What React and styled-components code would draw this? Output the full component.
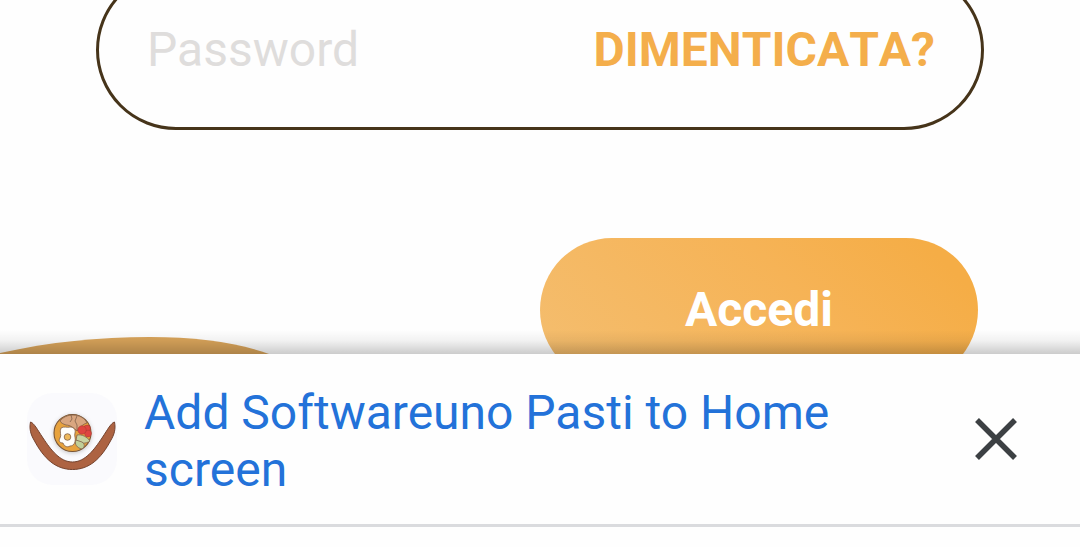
import React from "react";
import styled, { createGlobalStyle } from "styled-components";

const GlobalStyle = createGlobalStyle`
  * { box-sizing: border-box; }
  body { margin: 0; background: #fefefe; font-family: Roboto, "Liberation Sans", sans-serif; }
`;

const Screen = styled.div`
  display: flex;
  flex-direction: column;
  height: 100vh;
`;

const LoginArea = styled.main`
  position: relative;
  flex: 1;
  min-height: 0;
  overflow: hidden;
`;

const LoginForm = styled.form`
  display: flex;
  flex-direction: column;
  gap: 108px;
  margin-top: -30px;
  padding: 0 96px;
`;

const PasswordField = styled.div`
  display: flex;
  align-items: center;
  height: 160px;
  padding: 0 46px 0 48px;
  border: 3px solid #46341a;
  border-radius: 80px;
`;

const PasswordInput = styled.input`
  flex: 1;
  min-width: 0;
  padding: 0;
  border: 0;
  outline: 0;
  background: transparent;
  color: #46341a;
  font: 400 48px/56px Roboto, "Liberation Sans", sans-serif;
  &::placeholder { color: #dfdddc; opacity: 1; }
`;

const ForgotLink = styled.a`
  color: #f4ae4b;
  font-size: 48px;
  font-weight: 700;
  line-height: 56px;
  font-kerning: none;
  text-decoration: none;
`;

const SubmitButton = styled.button`
  align-self: flex-end;
  width: 438px;
  height: 144px;
  margin-right: 6px;
  padding: 0;
  border: 0;
  border-radius: 72px;
  background: linear-gradient(45deg, #f4be70, #f6b356 60%, #f5ad46 90%);
  color: #fff;
  font: 700 48px/56px Roboto, "Liberation Sans", sans-serif;
`;

const Wave = styled.svg`
  position: absolute;
  left: 0;
  bottom: 0;
`;

const InstallBanner = styled.aside`
  position: relative;
  display: flex;
  align-items: center;
  gap: 27px;
  padding: 26px 60px 26px 27px;
  border-bottom: 3px solid #dadbde;
  margin-bottom: 20px;
  background: #fefefe;
  &::before {
    content: "";
    position: absolute;
    left: 0;
    right: 0;
    bottom: 100%;
    height: 24px;
    background: linear-gradient(to bottom, rgba(0, 0, 0, 0), rgba(0, 0, 0, 0.05) 45%, rgba(0, 0, 0, 0.2));
    pointer-events: none;
  }
`;

const AppIcon = styled.svg`
  flex: none;
  width: 90px;
  height: 92px;
`;

const InstallLink = styled.a`
  flex: 1;
  max-width: 740px;
  padding-top: 4px;
  color: #2372d9;
  font-size: 48px;
  line-height: 57px;
  text-decoration: none;
`;

const CloseButton = styled.button`
  display: flex;
  margin-left: auto;
  padding: 0;
  border: 0;
  background: transparent;
`;

function MealIcon() {
  return (
    <AppIcon viewBox="7 7 90 92" aria-hidden="true">
      <defs>
        <filter id="plateShadow" x="-30%" y="-30%" width="160%" height="160%">
          <feDropShadow dx="0" dy="1" stdDeviation="2" floodOpacity="0.22" />
        </filter>
      </defs>
      <rect x="7" y="7" width="90" height="92" rx="26" fill="#fafafd" />
      <path
        d="M10.5 36 C14 37 17 43 23 52 C31 64 40 76 52.5 76 C65 76 74 64 82 52 C88 43 91 37 94.5 36 C96 43 94 49 91 54 C81 73 69 83.5 52.5 83.5 C36 83.5 24 73 14 54 C11 49 9 43 10.5 36Z"
        fill="#ad6342"
        stroke="#74432e"
        strokeWidth="1"
      />
      <circle cx="52.5" cy="47" r="18.5" fill="#e7a23d" stroke="#7a5534" strokeWidth="1.1" filter="url(#plateShadow)" />
      <g stroke="#80604a" strokeWidth="0.8" strokeLinejoin="round">
        <path d="M40 35 C43 31 48 29 53 29 C59 29 65 32 67 37 C63 38 60 41 57 45 C54 42 50 39 46 39 C43 38 41 37 40 35Z" fill="#d9a680" />
        <path d="M51 29 L52 33 L50 36 M57 30 L55 35 L57 39 L57 45" fill="none" />
        <path d="M41 42 C44 40 47 42 50 41 C53 41 56 43 55 47 C54 50 56 52 55 56 C54 59 52 60 50 60 C47 62 44 60 43 57 C40 57 38 55 40 52 C42 49 39 46 41 42Z" fill="#fffefa" />
        <circle cx="47.5" cy="51" r="3.3" fill="#efb95a" />
        <path d="M57 49 C62 48 67 51 70 55 C66 58 60 58 56 54Z" fill="#c9d3a0" />
        <path d="M56 54 C54 58 57 62 62 63 C65 61 65 58 62 56Z" fill="#c0cf98" />
      </g>
      <g fill="#df4540" stroke="#a23a31" strokeWidth="0.5">
        <circle cx="67" cy="42.5" r="3.4" />
        <circle cx="68" cy="47.5" r="3.4" />
        <circle cx="62" cy="44" r="4.2" />
      </g>
    </AppIcon>
  );
}

export default function App() {
  return (
    <Screen>
      <GlobalStyle />
      <LoginArea>
        <LoginForm onSubmit={(event) => event.preventDefault()}>
          <PasswordField>
            <PasswordInput type="password" placeholder="Password" aria-label="Password" />
            <ForgotLink href="#forgot">DIMENTICATA?</ForgotLink>
          </PasswordField>
          <SubmitButton type="submit">Accedi</SubmitButton>
        </LoginForm>
        <Wave width="270" height="17" viewBox="0 0 270 17" aria-hidden="true">
          <path d="M0 16 C50 5 98 0 150 0 C198 0 239 6 269 17 L0 17Z" fill="#d9a45a" />
        </Wave>
      </LoginArea>
      <InstallBanner>
        <MealIcon />
        <InstallLink href="#install">Add Softwareuno Pasti to Home screen</InstallLink>
        <CloseButton type="button" aria-label="Close">
          <svg width="48" height="48" viewBox="0 0 48 48" aria-hidden="true">
            <path d="M5 5 L43 43 M43 5 L5 43" stroke="#3c4043" strokeWidth="5.5" />
          </svg>
        </CloseButton>
      </InstallBanner>
    </Screen>
  );
}
